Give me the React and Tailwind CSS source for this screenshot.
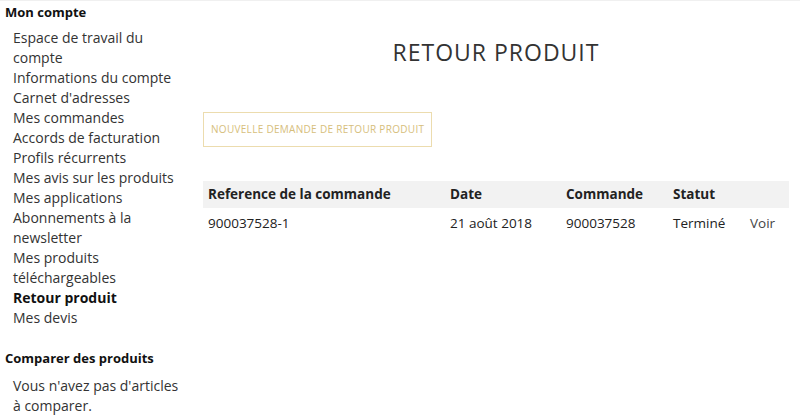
import React from 'react';

const accountLinks = [
  'Espace de travail du compte',
  'Informations du compte',
  "Carnet d'adresses",
  'Mes commandes',
  'Accords de facturation',
  'Profils récurrents',
  'Mes avis sur les produits',
  'Mes applications',
  'Abonnements à la newsletter',
  'Mes produits téléchargeables',
  'Retour produit',
  'Mes devis',
];

const Sidebar = () => (
  <aside className="w-[190px] shrink-0 pl-[5px] text-[#333]">
    <h2 className="text-[13px] font-bold leading-[22px] text-[#111]">Mon compte</h2>
    <ul className="mt-[5px] pl-[8px] pr-[8px]">
      {accountLinks.map((label) => (
        <li
          key={label}
          className={
            label === 'Retour produit'
              ? 'text-[14px] leading-[20px] font-bold text-[#111]'
              : 'text-[14px] leading-[20px]'
          }
        >
          {label}
        </li>
      ))}
    </ul>
    <h2 className="mt-[20px] text-[13px] font-bold leading-[20px] text-[#111]">Comparer des produits</h2>
    <p className="mt-[8px] pl-[8px] pr-[8px] text-[14px] leading-[20px]">
      Vous n'avez pas d'articles à comparer.
    </p>
  </aside>
);

const ReturnsTable = () => (
  <div className="mt-[34px] text-[13.5px] text-[#222]">
    <div className="grid grid-cols-[242px_116px_107px_77px_1fr] h-[27px] items-center bg-[#f2f2f2] font-bold">
      <span className="pl-[5px]">Reference de la commande</span>
      <span className="pl-[5px]">Date</span>
      <span className="pl-[5px]">Commande</span>
      <span className="pl-[5px]">Statut</span>
      <span />
    </div>
    <div className="grid grid-cols-[242px_116px_107px_77px_1fr] h-[30px] items-center">
      <span className="pl-[5px]">900037528-1</span>
      <span className="pl-[5px]">21 août 2018</span>
      <span className="pl-[5px]">900037528</span>
      <span className="pl-[5px]">Terminé</span>
      <span className="pl-[5px] text-[#444]">Voir</span>
    </div>
  </div>
);

export default function App() {
  return (
    <div
      className="flex w-[800px] h-[420px] overflow-hidden bg-white border-t border-[#f0f0f0]"
      style={{ fontFamily: '"Open Sans", Arial, sans-serif' }}
    >
      <Sidebar />
      <main className="ml-[13px] w-[586px]">
        <h1 className="mt-[36px] text-center text-[23px] leading-[30px] tracking-[1px] text-[#333]">
          RETOUR PRODUIT
        </h1>
        <button className="mt-[45px] h-[35px] px-[7px] border border-[#ecdcae] text-[10px] tracking-[0.3px] text-[#d6be7c] uppercase">
          Nouvelle demande de retour produit
        </button>
        <ReturnsTable />
      </main>
    </div>
  );
}
